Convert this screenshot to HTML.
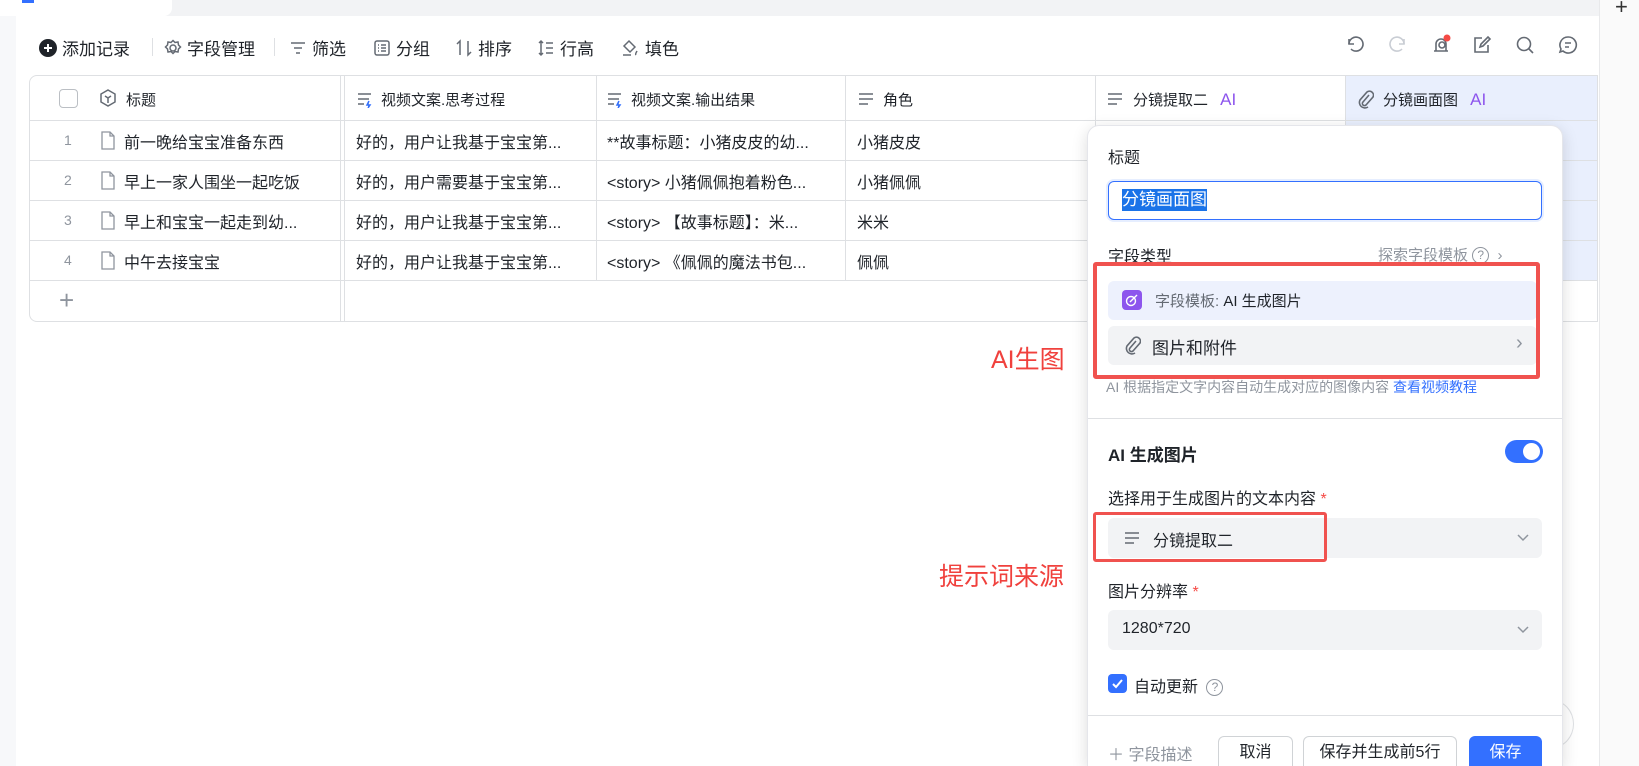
<!DOCTYPE html>
<html style="width:1639px;height:766px;overflow:hidden"><head><meta charset="utf-8"><style>
*{margin:0;padding:0;box-sizing:border-box}
body{width:1639px;height:766px;overflow:hidden;background:#fff;font-family:"Liberation Sans","Noto Sans CJK SC",sans-serif;color:#1f2329;position:relative}
.a{position:absolute;white-space:nowrap}
.tb{font-size:17px;top:35px;display:flex;align-items:center;gap:5px}
.hd{font-size:15px}
.cell{font-size:16px}
.num{font-size:14px;color:#8f959e}
.hl{position:absolute;height:1px;background:#dee0e3}
.vl{position:absolute;width:1px;background:#dee0e3}
svg{display:block}
</style></head><body>
<div class="a" style="left:0;top:0;width:1599px;height:16px;background:#f2f3f5"></div>
<div class="a" style="left:0;top:0;width:172px;height:16px;background:#fff;border-radius:0 0 8px 0"></div>
<div class="a" style="left:22px;top:0;width:12px;height:3px;background:#3370ff"></div>
<div class="a" style="left:0;top:16px;width:16px;height:750px;background:#f7f8fa"></div>
<div class="a" style="left:1599px;top:0;width:40px;height:766px;background:#fafafa;border-left:1px solid #e8e9eb"></div>
<div class="a" style="left:1615px;top:-6px;font-size:22px;color:#333">+</div>

<div class="a tb" style="left:39px"><svg width="18" height="18"><circle cx="9" cy="9" r="9" fill="#1f2329"/><path d="M9 5v8M5 9h8" stroke="#fff" stroke-width="2"/></svg>添加记录</div>
<div class="a" style="left:152px;top:38px;width:1px;height:18px;background:#dee0e3"></div>
<div class="a tb" style="left:164px"><svg width="18" height="18" fill="none" stroke="#646a73" stroke-width="1.5"><circle cx="9" cy="9" r="3"/><path d="M9 1.5l2 2 3-.5.5 3 2 2-2 2-.5 3-3-.5-2 2-2-2-3 .5-.5-3-2-2 2-2 .5-3 3 .5z"/></svg>字段管理</div>
<div class="a" style="left:274px;top:38px;width:1px;height:18px;background:#dee0e3"></div>
<div class="a tb" style="left:289px"><svg width="18" height="18" stroke="#646a73" stroke-width="1.5"><path d="M2 4h14M5 9h8M7 14h4"/></svg>筛选</div>
<div class="a tb" style="left:373px"><svg width="18" height="18" fill="none" stroke="#646a73" stroke-width="1.5"><rect x="2" y="2" width="14" height="14" rx="2"/><path d="M5 6h1M8 6h5M5 9h1M8 9h5M5 12h1M8 12h5"/></svg>分组</div>
<div class="a tb" style="left:455px"><svg width="18" height="18" fill="none" stroke="#646a73" stroke-width="1.5"><path d="M5 16V2L2 5M13 2v14l3-3"/></svg>排序</div>
<div class="a tb" style="left:537px"><svg width="18" height="18" fill="none" stroke="#646a73" stroke-width="1.5"><path d="M4 2v14M2 4l2-2 2 2M2 14l2 2 2-2M9 4h7M9 9h7M9 14h7"/></svg>行高</div>
<div class="a tb" style="left:620px"><svg width="20" height="18" fill="none" stroke="#646a73" stroke-width="1.5"><path d="M9 2l6 6-5 5-6-6z"/><path d="M17 12c-1 2-2 3-1 4"/><path d="M3 16h8"/></svg>填色</div>

<svg class="a" style="left:1345px;top:35px" width="20" height="20" fill="none" stroke="#646a73" stroke-width="1.6"><path d="M4 4v5h5"/><path d="M4 9a7 7 0 1 1 2 5"/></svg>
<svg class="a" style="left:1388px;top:35px" width="20" height="20" fill="none" stroke="#c9cdd4" stroke-width="1.6"><path d="M16 4v5h-5"/><path d="M16 9a7 7 0 1 0-2 5"/></svg>
<svg class="a" style="left:1430px;top:34px" width="22" height="22" fill="none" stroke="#646a73" stroke-width="1.6"><path d="M4 17h14M6 17V10a5 5 0 0 1 10 0v7"/><circle cx="12" cy="11" r="3"/><circle cx="17" cy="4" r="3.5" fill="#f54a45" stroke="none"/></svg>
<svg class="a" style="left:1472px;top:35px" width="20" height="20" fill="none" stroke="#646a73" stroke-width="1.6"><path d="M16 10v7H3V3h7"/><path d="M8 12l1-3 7-7 2 2-7 7z"/></svg>
<svg class="a" style="left:1515px;top:35px" width="20" height="20" fill="none" stroke="#646a73" stroke-width="1.6"><circle cx="9" cy="9" r="6.5"/><path d="M14 14l4 4"/></svg>
<svg class="a" style="left:1558px;top:35px" width="20" height="20" fill="none" stroke="#646a73" stroke-width="1.6"><path d="M10 2a8 8 0 1 1-5 14l-3 1 1-3A8 8 0 0 1 10 2z"/><path d="M7 8h6M7 12h4"/></svg>

<div class="a" style="left:29px;top:75px;width:1569px;height:247px;border:1px solid #dee0e3;border-radius:8px 0 0 8px;overflow:hidden">
 <div class="a" style="left:1316px;top:0;width:253px;height:205px;background:#e9effd"></div>
</div>
<div class="hl" style="left:30px;top:120px;width:1567px"></div>
<div class="hl" style="left:30px;top:160px;width:1567px"></div>
<div class="hl" style="left:30px;top:200px;width:1567px"></div>
<div class="hl" style="left:30px;top:240px;width:1567px"></div>
<div class="hl" style="left:30px;top:280px;width:1567px"></div>
<div class="vl" style="left:340px;top:76px;height:245px"></div>
<div class="vl" style="left:344px;top:76px;height:245px"></div>
<div class="vl" style="left:596px;top:76px;height:205px"></div>
<div class="vl" style="left:845px;top:76px;height:205px"></div>
<div class="vl" style="left:1095px;top:76px;height:205px"></div>
<div class="vl" style="left:1345px;top:76px;height:205px"></div>

<div class="a" style="left:59px;top:89px;width:19px;height:19px;border:1.5px solid #bbbfc4;border-radius:4px"></div>
<svg class="a" style="left:98px;top:88px" width="20" height="20" fill="none" stroke="#646a73" stroke-width="1.5"><path d="M10 2l7 4v8l-7 4-7-4V6z"/><path d="M7 8l3 2 3-2M10 10v5"/></svg>
<div class="a hd" style="left:126px;top:89px">标题</div>
<svg class="a" style="left:356px;top:90px" width="18" height="18" stroke="#646a73" stroke-width="1.5"><path d="M2 4h13M2 9h11M2 14h6"/><path d="M13 11l-2 4h3l-2 3" stroke="#3370ff"/></svg>
<div class="a hd" style="left:381px;top:89px">视频文案.思考过程</div>
<svg class="a" style="left:606px;top:90px" width="18" height="18" stroke="#646a73" stroke-width="1.5"><path d="M2 4h13M2 9h11M2 14h6"/><path d="M13 11l-2 4h3l-2 3" stroke="#3370ff"/></svg>
<div class="a hd" style="left:631px;top:89px">视频文案.输出结果</div>
<svg class="a" style="left:857px;top:90px" width="18" height="18" stroke="#646a73" stroke-width="1.5"><path d="M2 4h14M2 9h14M2 14h9"/></svg>
<div class="a hd" style="left:883px;top:89px">角色</div>
<svg class="a" style="left:1106px;top:90px" width="18" height="18" stroke="#646a73" stroke-width="1.5"><path d="M2 4h14M2 9h14M2 14h9"/></svg>
<div class="a hd" style="left:1133px;top:89px">分镜提取二 <span style="color:#8d55ed;margin-left:8px;font-size:17px">AI</span></div>
<svg class="a" style="left:1356px;top:89px" width="18" height="20" fill="none" stroke="#646a73" stroke-width="1.6"><path d="M13 6l-6 7a2 2 0 0 0 3 3l7-8a4 4 0 0 0-6-5l-7 8a5.5 5.5 0 0 0 8 7"/></svg>
<div class="a hd" style="left:1383px;top:89px">分镜画面图 <span style="color:#8d55ed;margin-left:8px;font-size:17px">AI</span></div>

<div class="a num" style="left:64px;top:132px">1</div>
<div class="a num" style="left:64px;top:172px">2</div>
<div class="a num" style="left:64px;top:212px">3</div>
<div class="a num" style="left:64px;top:252px">4</div>
<svg class="a" style="left:100px;top:131px" width="16" height="19" fill="none" stroke="#8f959e" stroke-width="1.3"><path d="M2 1h8l4 4v13H2z"/><path d="M10 1v4h4"/></svg>
<svg class="a" style="left:100px;top:171px" width="16" height="19" fill="none" stroke="#8f959e" stroke-width="1.3"><path d="M2 1h8l4 4v13H2z"/><path d="M10 1v4h4"/></svg>
<svg class="a" style="left:100px;top:211px" width="16" height="19" fill="none" stroke="#8f959e" stroke-width="1.3"><path d="M2 1h8l4 4v13H2z"/><path d="M10 1v4h4"/></svg>
<svg class="a" style="left:100px;top:251px" width="16" height="19" fill="none" stroke="#8f959e" stroke-width="1.3"><path d="M2 1h8l4 4v13H2z"/><path d="M10 1v4h4"/></svg>
<div class="a cell" style="left:124px;top:129px">前一晚给宝宝准备东西</div>
<div class="a cell" style="left:124px;top:169px">早上一家人围坐一起吃饭</div>
<div class="a cell" style="left:124px;top:209px">早上和宝宝一起走到幼...</div>
<div class="a cell" style="left:124px;top:249px">中午去接宝宝</div>
<div class="a cell" style="left:356px;top:129px">好的，用户让我基于宝宝第...</div>
<div class="a cell" style="left:356px;top:169px">好的，用户需要基于宝宝第...</div>
<div class="a cell" style="left:356px;top:209px">好的，用户让我基于宝宝第...</div>
<div class="a cell" style="left:356px;top:249px">好的，用户让我基于宝宝第...</div>
<div class="a cell" style="left:607px;top:129px">**故事标题：小猪皮皮的幼...</div>
<div class="a cell" style="left:607px;top:169px">&lt;story&gt; 小猪佩佩抱着粉色...</div>
<div class="a cell" style="left:607px;top:209px">&lt;story&gt; 【故事标题】：米...</div>
<div class="a cell" style="left:607px;top:249px">&lt;story&gt; 《佩佩的魔法书包...</div>
<div class="a cell" style="left:857px;top:129px">小猪皮皮</div>
<div class="a cell" style="left:857px;top:169px">小猪佩佩</div>
<div class="a cell" style="left:857px;top:209px">米米</div>
<div class="a cell" style="left:857px;top:249px">佩佩</div>
<div class="a" style="left:59px;top:285px;font-size:26px;color:#8f959e;font-weight:300">+</div>

<div class="a" style="left:991px;top:340px;font-size:25px;color:#f0413d">AI生图</div>
<div class="a" style="left:939px;top:557px;font-size:25px;color:#f0413d">提示词来源</div>
<div class="a" style="left:1530px;top:700px;width:44px;height:48px;border:1px solid #dee0e3;border-radius:50%"></div>

<div class="a" style="left:1087px;top:125px;width:476px;height:641px;background:#fff;border-radius:12px 12px 0 0;box-shadow:0 4px 16px rgba(0,0,0,.14);border:1px solid #e5e6eb;border-bottom:none"></div>
<div class="a" style="left:1108px;top:144px;font-size:16px">标题</div>
<div class="a" style="left:1108px;top:181px;width:434px;height:39px;border:1.5px solid #3370ff;border-radius:6px;box-shadow:0 0 0 2px rgba(51,112,255,.12)"></div>
<div class="a" style="left:1122px;top:189px;font-size:17px;background:#1a73e8;color:#fff;line-height:22px">分镜画面图</div>
<div class="a" style="left:1108px;top:243px;font-size:16px">字段类型</div>
<div class="a" style="left:1378px;top:244px;font-size:15px;color:#8f959e">探索字段模板 <span style="display:inline-block;width:17px;height:17px;border:1.3px solid #8f959e;border-radius:50%;font-size:12px;text-align:center;line-height:15px;vertical-align:1px">?</span>&nbsp; ›</div>
<div class="a" style="left:1108px;top:281px;width:429px;height:39px;background:#edf1fd;border-radius:6px"></div>
<div class="a" style="left:1122px;top:290px;width:20px;height:20px;background:#8d55ed;border-radius:4px"></div>
<svg class="a" style="left:1125px;top:293px" width="14" height="14" fill="none" stroke="#fff" stroke-width="1.4"><circle cx="6" cy="8" r="4.5"/><path d="M5 9l7-7"/></svg>
<div class="a" style="left:1155px;top:290px;font-size:15px;color:#646a73">字段模板: <span style="color:#1f2329">AI 生成图片</span></div>
<div class="a" style="left:1108px;top:326px;width:429px;height:39px;background:#f2f3f5;border-radius:6px"></div>
<svg class="a" style="left:1123px;top:335px" width="18" height="20" fill="none" stroke="#646a73" stroke-width="1.6"><path d="M13 6l-6 7a2 2 0 0 0 3 3l7-8a4 4 0 0 0-6-5l-7 8a5.5 5.5 0 0 0 8 7"/></svg>
<div class="a" style="left:1152px;top:334px;font-size:17px">图片和附件</div>
<div class="a" style="left:1516px;top:332px;font-size:20px;color:#8f959e">›</div>
<div class="a" style="left:1093px;top:262px;width:447px;height:117px;border:4px solid #f0524f;border-radius:3px"></div>
<div class="a" style="left:1106px;top:377px;font-size:14px;color:#8f959e">AI 根据指定文字内容自动生成对应的图像内容 <span style="color:#3370ff">查看视频教程</span></div>
<div class="hl" style="left:1088px;top:418px;width:474px"></div>
<div class="a" style="left:1108px;top:441px;font-size:17px;font-weight:bold">AI 生成图片</div>
<div class="a" style="left:1505px;top:440px;width:38px;height:23px;background:#3370ff;border-radius:12px"></div>
<div class="a" style="left:1523px;top:443px;width:17px;height:17px;background:#fff;border-radius:50%"></div>
<div class="a" style="left:1108px;top:485px;font-size:16px">选择用于生成图片的文本内容 <span style="color:#f54a45">*</span></div>
<div class="a" style="left:1108px;top:518px;width:434px;height:40px;background:#f2f3f5;border-radius:6px"></div>
<svg class="a" style="left:1123px;top:530px" width="18" height="16" stroke="#646a73" stroke-width="1.5"><path d="M2 3h14M2 8h14M2 13h9"/></svg>
<div class="a" style="left:1153px;top:527px;font-size:16px">分镜提取二</div>
<svg class="a" style="left:1516px;top:533px" width="14" height="10" fill="none" stroke="#8f959e" stroke-width="1.5"><path d="M2 2l5 5 5-5"/></svg>
<div class="a" style="left:1093px;top:512px;width:234px;height:50px;border:3px solid #f0524f;border-radius:3px"></div>
<div class="a" style="left:1108px;top:578px;font-size:16px">图片分辨率 <span style="color:#f54a45">*</span></div>
<div class="a" style="left:1108px;top:610px;width:434px;height:40px;background:#f2f3f5;border-radius:6px"></div>
<div class="a" style="left:1122px;top:620px;font-size:16px">1280*720</div>
<svg class="a" style="left:1516px;top:625px" width="14" height="10" fill="none" stroke="#8f959e" stroke-width="1.5"><path d="M2 2l5 5 5-5"/></svg>
<div class="a" style="left:1108px;top:674px;width:19px;height:19px;background:#3370ff;border-radius:4px"></div>
<svg class="a" style="left:1110px;top:676px" width="15" height="15" fill="none" stroke="#fff" stroke-width="2"><path d="M3 8l3 3 6-7"/></svg>
<div class="a" style="left:1134px;top:673px;font-size:16px">自动更新 <span style="display:inline-block;width:17px;height:17px;border:1.3px solid #8f959e;border-radius:50%;font-size:12px;text-align:center;line-height:15px;color:#8f959e;margin-left:4px;vertical-align:1px">?</span></div>
<div class="hl" style="left:1088px;top:715px;width:474px"></div>
<div class="a" style="left:1108px;top:741px;font-size:16px;color:#8f959e">＋ 字段描述</div>
<div class="a" style="left:1218px;top:736px;width:75px;height:30px;border:1px solid #d0d3d6;border-bottom:none;border-radius:6px 6px 0 0;font-size:16px;text-align:center;line-height:32px;overflow:hidden">取消</div>
<div class="a" style="left:1303px;top:736px;width:154px;height:30px;border:1px solid #d0d3d6;border-bottom:none;border-radius:6px 6px 0 0;font-size:16px;text-align:center;line-height:32px;overflow:hidden">保存并生成前5行</div>
<div class="a" style="left:1469px;top:736px;width:73px;height:30px;background:#3370ff;border-radius:6px 6px 0 0;font-size:16px;color:#fff;text-align:center;line-height:34px;overflow:hidden">保存</div>
</body></html>
